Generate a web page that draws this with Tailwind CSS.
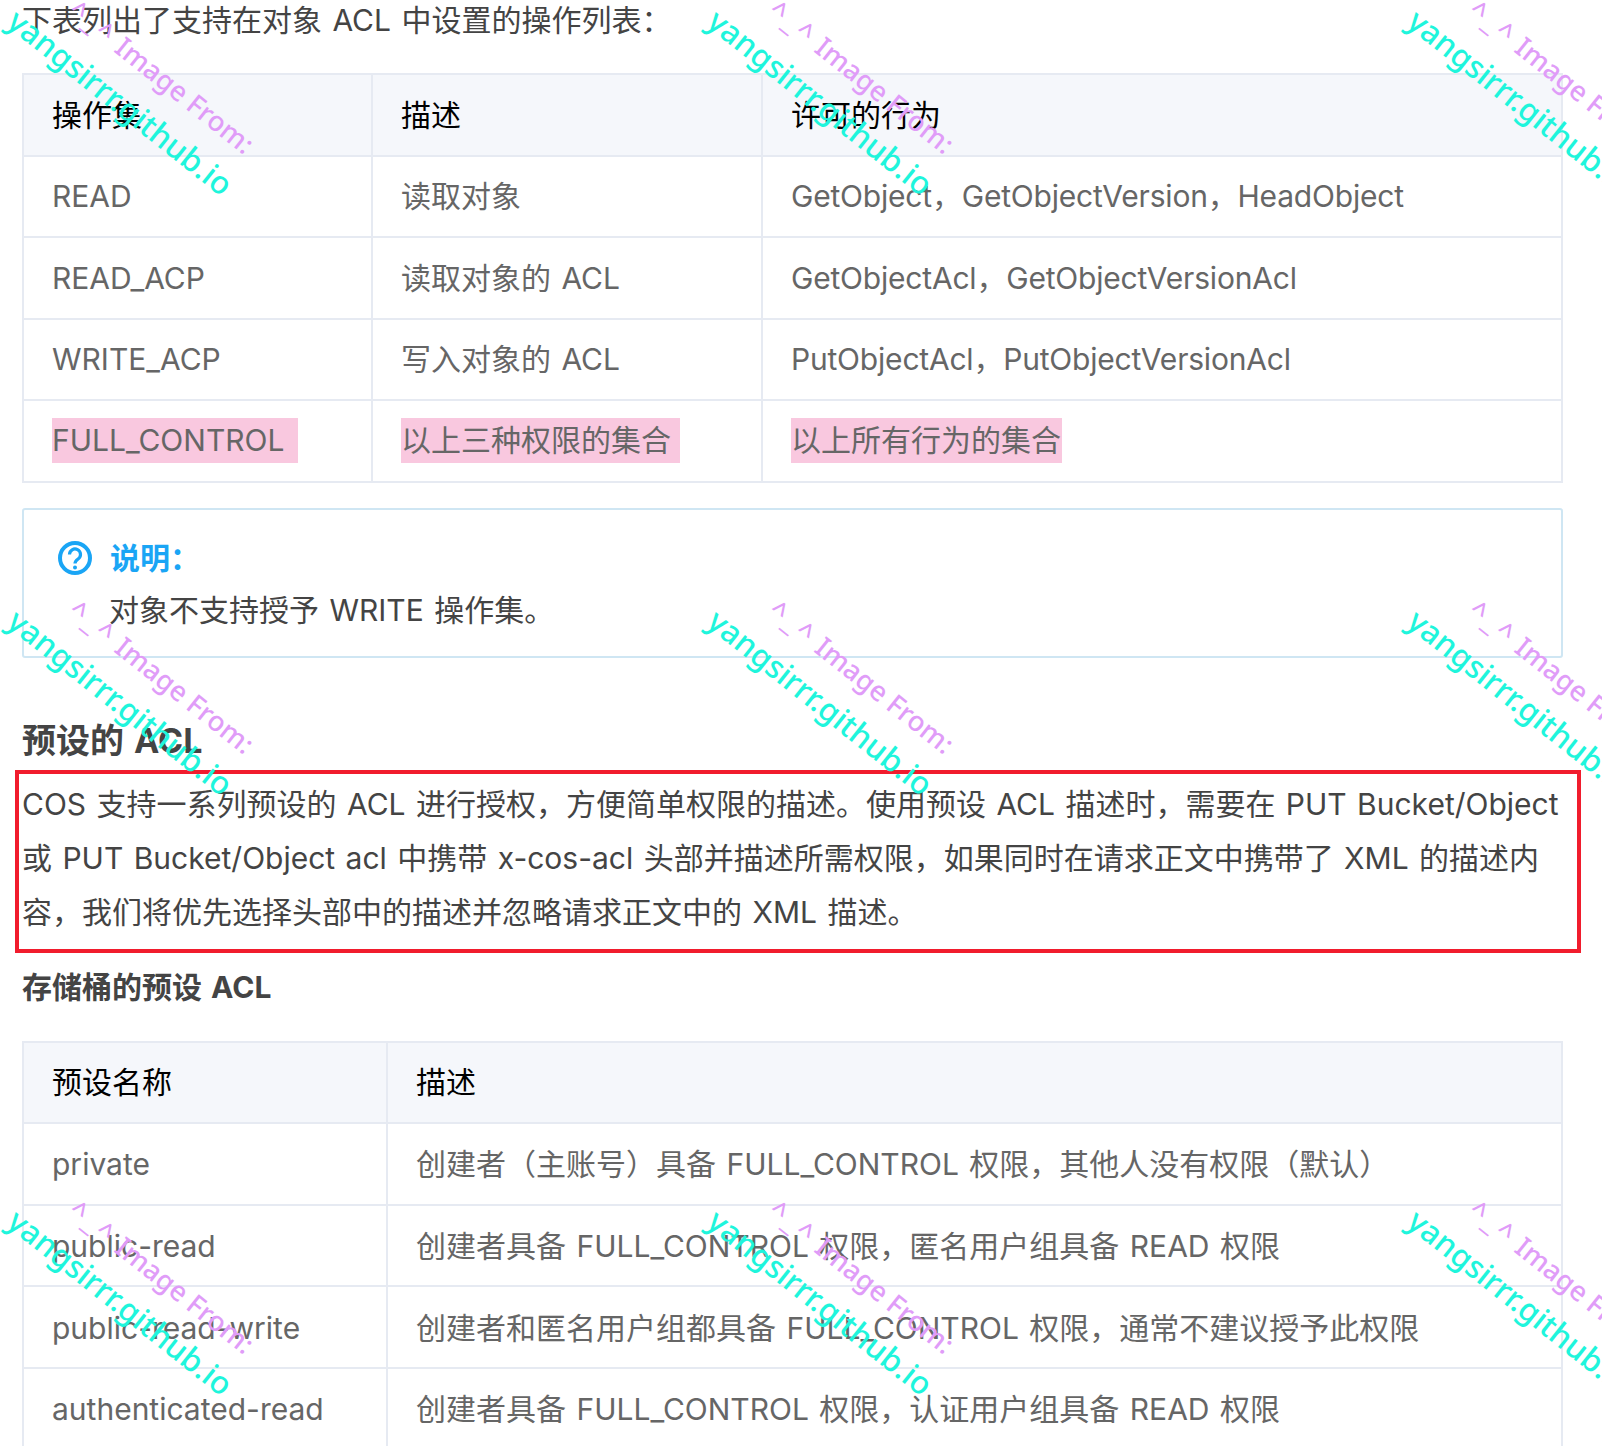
<!DOCTYPE html>
<html lang="zh-CN">
<head>
    <meta charset="UTF-8">
    <title>预设的 ACL</title>
    <script src="https://cdn.jsdelivr.net/npm/@tailwindcss/browser@4"></script>
</head>
<body class="bg-white">
<div class="relative w-[1602px] h-[1446px] overflow-hidden px-[22px] text-[30px] leading-[42px] [word-spacing:2px] text-[#444] font-['Inter','Noto_Sans_CJK_SC',sans-serif]">

    <p class="h-[40px] leading-[40px] mb-[33px]">下表列出了支持在对象 ACL 中设置的操作列表：</p>

    <!-- acl table -->
    <table class="w-[1541px] table-fixed border-collapse border-2 border-[#e6eaf2] text-[#666]">
        <colgroup><col class="w-[349px]"><col class="w-[390px]"><col></colgroup>
        <thead class="bg-[#f5f7fb] text-black">
            <tr class="h-[81.5px]">
                <th class="border-2 border-[#e6eaf2] px-[28px] text-left font-normal">操作集</th>
                <th class="border-2 border-[#e6eaf2] px-[28px] text-left font-normal">描述</th>
                <th class="border-2 border-[#e6eaf2] px-[28px] text-left font-normal">许可的行为</th>
            </tr>
        </thead>
        <tbody>
            <tr class="h-[81.5px]">
                <td class="border-2 border-[#e6eaf2] px-[28px]">READ</td>
                <td class="border-2 border-[#e6eaf2] px-[28px]">读取对象</td>
                <td class="border-2 border-[#e6eaf2] px-[28px] tracking-[-0.2px]">GetObject，GetObjectVersion，HeadObject</td>
            </tr>
            <tr class="h-[81.5px]">
                <td class="border-2 border-[#e6eaf2] px-[28px]">READ_ACP</td>
                <td class="border-2 border-[#e6eaf2] px-[28px]">读取对象的 ACL</td>
                <td class="border-2 border-[#e6eaf2] px-[28px] tracking-[-0.2px]">GetObjectAcl，GetObjectVersionAcl</td>
            </tr>
            <tr class="h-[81.5px]">
                <td class="border-2 border-[#e6eaf2] px-[28px]">WRITE_ACP</td>
                <td class="border-2 border-[#e6eaf2] px-[28px]">写入对象的 ACL</td>
                <td class="border-2 border-[#e6eaf2] px-[28px] tracking-[-0.2px]">PutObjectAcl，PutObjectVersionAcl</td>
            </tr>
            <tr class="h-[81.5px]">
                <td class="border-2 border-[#e6eaf2] px-[28px]"><span class="inline-block h-[45px] pr-[13px] bg-[#f9c8df] leading-[45px]">FULL_CONTROL</span></td>
                <td class="border-2 border-[#e6eaf2] px-[28px]"><span class="inline-block h-[45px] pr-[9px] bg-[#f9c8df] leading-[45px]">以上三种权限的集合</span></td>
                <td class="border-2 border-[#e6eaf2] px-[28px]"><span class="inline-block h-[45px] pr-[1px] bg-[#f9c8df] leading-[45px]">以上所有行为的集合</span></td>
            </tr>
        </tbody>
    </table>

    <!-- note -->
    <div class="mt-[25px] h-[150px] w-[1541px] rounded-[3px] border-2 border-[#cfe6f3] pt-[27px] pl-[34px]">
        <div class="flex items-center gap-[18px] h-[42px] font-bold text-[#1aa5f5]">
            <svg class="w-[34px] h-[34px]" viewBox="0 0 34 34" fill="none" stroke="#1aa5f5" stroke-width="4">
                <circle cx="17" cy="17" r="15"/>
                <path d="M11.5 13.5a5.5 5.5 0 1 1 8.6 4.5c-2 1.4-3.1 2.2-3.1 4.5" stroke-width="3.2"/>
                <circle cx="17" cy="26.5" r="2" fill="#1aa5f5" stroke="none"/>
            </svg>
            <span>说明：</span>
        </div>
        <p class="ml-[51px] mt-[10px]">对象不支持授予 WRITE 操作集。</p>
    </div>

    <h2 class="mt-[62px] h-[42px] text-[34px] font-bold">预设的 ACL</h2>

    <!-- red marked paragraph -->
    <div class="relative mt-[15px] leading-[54px] whitespace-nowrap">
        <p>COS 支持一系列预设的 ACL 进行授权，方便简单权限的描述。使用预设 ACL 描述时，需要在 PUT Bucket/Object<br>或 PUT Bucket/Object acl 中携带 x-cos-acl 头部并描述所需权限，如果同时在请求正文中携带了 XML 的描述内<br>容，我们将优先选择头部中的描述并忽略请求正文中的 XML 描述。</p>
        <div class="absolute -left-[7px] -top-[7px] w-[1566px] h-[183px] border-[4px] border-[#f11c2d]"></div>
    </div>

    <h3 class="mt-[27px] h-[42px] font-bold">存储桶的预设 ACL</h3>

    <!-- canned acl table -->
    <table class="mt-[33px] w-[1541px] table-fixed border-collapse border-2 border-[#e6eaf2] text-[#666]">
        <colgroup><col class="w-[364px]"><col></colgroup>
        <thead class="bg-[#f5f7fb] text-black">
            <tr class="h-[81.5px]">
                <th class="border-2 border-[#e6eaf2] px-[28px] text-left font-normal">预设名称</th>
                <th class="border-2 border-[#e6eaf2] px-[28px] text-left font-normal">描述</th>
            </tr>
        </thead>
        <tbody>
            <tr class="h-[81.5px]">
                <td class="border-2 border-[#e6eaf2] px-[28px] pt-[1px]">private</td>
                <td class="border-2 border-[#e6eaf2] px-[28px] pt-[1px]">创建者（主账号）具备 FULL_CONTROL 权限，其他人没有权限（默认）</td>
            </tr>
            <tr class="h-[81.5px]">
                <td class="border-2 border-[#e6eaf2] px-[28px] pt-[2px]">public-read</td>
                <td class="border-2 border-[#e6eaf2] px-[28px] pt-[2px]">创建者具备 FULL_CONTROL 权限，匿名用户组具备 READ 权限</td>
            </tr>
            <tr class="h-[81.5px]">
                <td class="border-2 border-[#e6eaf2] px-[28px] pt-[2px]">public-read-write</td>
                <td class="border-2 border-[#e6eaf2] px-[28px] pt-[2px]">创建者和匿名用户组都具备 FULL_CONTROL 权限，通常不建议授予此权限</td>
            </tr>
            <tr class="h-[81.5px]">
                <td class="border-2 border-[#e6eaf2] px-[28px] pt-[2px]">authenticated-read</td>
                <td class="border-2 border-[#e6eaf2] px-[28px] pt-[2px]">创建者具备 FULL_CONTROL 权限，认证用户组具备 READ 权限</td>
            </tr>
        </tbody>
    </table>

    <!-- watermarks -->
    <div class="absolute inset-0 pointer-events-none font-['Noto_Sans',sans-serif] text-[31.5px] leading-[40px] font-medium [word-spacing:0]">
        <div class="absolute left-[0px] top-[0px] origin-top-left rotate-[38.5deg] translate-x-[53px] -translate-y-[35px] whitespace-nowrap"><p class="mb-[5px] text-[#e09cf8] text-[27.5px] whitespace-pre pl-[41px]"><span class="tracking-[3px]">^_^</span> Image From:</p><p class="text-[#1ff5dc]">yangsirrr.github.io</p></div>
        <div class="absolute left-[700px] top-[0px] origin-top-left rotate-[38.5deg] translate-x-[53px] -translate-y-[35px] whitespace-nowrap"><p class="mb-[5px] text-[#e09cf8] text-[27.5px] whitespace-pre pl-[41px]"><span class="tracking-[3px]">^_^</span> Image From:</p><p class="text-[#1ff5dc]">yangsirrr.github.io</p></div>
        <div class="absolute left-[1400px] top-[0px] origin-top-left rotate-[38.5deg] translate-x-[53px] -translate-y-[35px] whitespace-nowrap"><p class="mb-[5px] text-[#e09cf8] text-[27.5px] whitespace-pre pl-[41px]"><span class="tracking-[3px]">^_^</span> Image From:</p><p class="text-[#1ff5dc]">yangsirrr.github.io</p></div>
        <div class="absolute left-[0px] top-[600px] origin-top-left rotate-[38.5deg] translate-x-[53px] -translate-y-[35px] whitespace-nowrap"><p class="mb-[5px] text-[#e09cf8] text-[27.5px] whitespace-pre pl-[41px]"><span class="tracking-[3px]">^_^</span> Image From:</p><p class="text-[#1ff5dc]">yangsirrr.github.io</p></div>
        <div class="absolute left-[700px] top-[600px] origin-top-left rotate-[38.5deg] translate-x-[53px] -translate-y-[35px] whitespace-nowrap"><p class="mb-[5px] text-[#e09cf8] text-[27.5px] whitespace-pre pl-[41px]"><span class="tracking-[3px]">^_^</span> Image From:</p><p class="text-[#1ff5dc]">yangsirrr.github.io</p></div>
        <div class="absolute left-[1400px] top-[600px] origin-top-left rotate-[38.5deg] translate-x-[53px] -translate-y-[35px] whitespace-nowrap"><p class="mb-[5px] text-[#e09cf8] text-[27.5px] whitespace-pre pl-[41px]"><span class="tracking-[3px]">^_^</span> Image From:</p><p class="text-[#1ff5dc]">yangsirrr.github.io</p></div>
        <div class="absolute left-[0px] top-[1200px] origin-top-left rotate-[38.5deg] translate-x-[53px] -translate-y-[35px] whitespace-nowrap"><p class="mb-[5px] text-[#e09cf8] text-[27.5px] whitespace-pre pl-[41px]"><span class="tracking-[3px]">^_^</span> Image From:</p><p class="text-[#1ff5dc]">yangsirrr.github.io</p></div>
        <div class="absolute left-[700px] top-[1200px] origin-top-left rotate-[38.5deg] translate-x-[53px] -translate-y-[35px] whitespace-nowrap"><p class="mb-[5px] text-[#e09cf8] text-[27.5px] whitespace-pre pl-[41px]"><span class="tracking-[3px]">^_^</span> Image From:</p><p class="text-[#1ff5dc]">yangsirrr.github.io</p></div>
        <div class="absolute left-[1400px] top-[1200px] origin-top-left rotate-[38.5deg] translate-x-[53px] -translate-y-[35px] whitespace-nowrap"><p class="mb-[5px] text-[#e09cf8] text-[27.5px] whitespace-pre pl-[41px]"><span class="tracking-[3px]">^_^</span> Image From:</p><p class="text-[#1ff5dc]">yangsirrr.github.io</p></div>
    </div>
</div>
</body>
</html>
